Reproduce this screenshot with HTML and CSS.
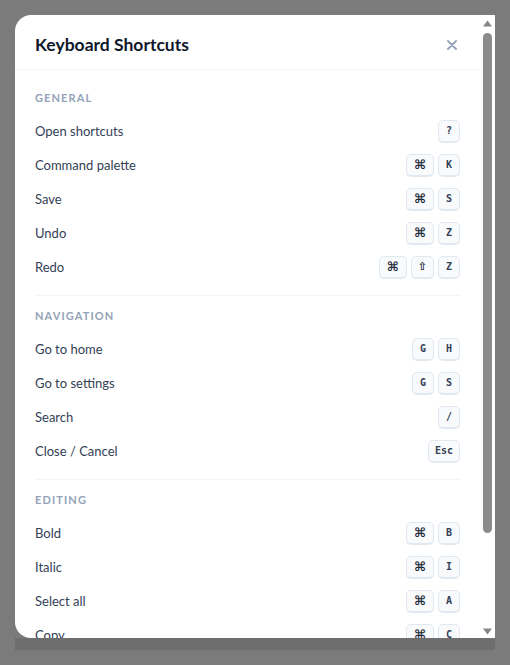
FILE: index.html
```html
<!DOCTYPE html>
<html lang="en">
<head>
    <meta charset="UTF-8">
    <meta name="viewport" content="width=device-width, initial-scale=1.0">
    <title>Keyboard Shortcuts</title>
    <link rel="stylesheet" href="styles.css">
</head>
<body>
    <div class="backdrop">
        <div class="modal-wrap">
            <div class="modal">
                <div class="modal-content">
                    <div class="modal-header">
                        <h2>Keyboard Shortcuts</h2>
                        <button class="close-btn" aria-label="Close">
                            <svg width="10" height="10" viewBox="0 0 10 10"><path d="M1 1L9 9M9 1L1 9" stroke="#94a3b8" stroke-width="1.8" stroke-linecap="round"/></svg>
                        </button>
                    </div>
                    <div class="modal-body">
                        <div class="section">
                            <div class="section-title">General</div>
                            <div class="row"><span>Open shortcuts</span><span class="keys"><kbd>?</kbd></span></div>
                            <div class="row"><span>Command palette</span><span class="keys"><kbd class="sym">⌘</kbd><kbd>K</kbd></span></div>
                            <div class="row"><span>Save</span><span class="keys"><kbd class="sym">⌘</kbd><kbd>S</kbd></span></div>
                            <div class="row"><span>Undo</span><span class="keys"><kbd class="sym">⌘</kbd><kbd>Z</kbd></span></div>
                            <div class="row"><span>Redo</span><span class="keys"><kbd class="sym">⌘</kbd><kbd class="shift">⇧</kbd><kbd>Z</kbd></span></div>
                        </div>
                        <div class="section">
                            <div class="section-title">Navigation</div>
                            <div class="row"><span>Go to home</span><span class="keys"><kbd>G</kbd><kbd>H</kbd></span></div>
                            <div class="row"><span>Go to settings</span><span class="keys"><kbd>G</kbd><kbd>S</kbd></span></div>
                            <div class="row"><span>Search</span><span class="keys"><kbd>/</kbd></span></div>
                            <div class="row"><span>Close / Cancel</span><span class="keys"><kbd>Esc</kbd></span></div>
                        </div>
                        <div class="section">
                            <div class="section-title">Editing</div>
                            <div class="row"><span>Bold</span><span class="keys"><kbd class="sym">⌘</kbd><kbd>B</kbd></span></div>
                            <div class="row"><span>Italic</span><span class="keys"><kbd class="sym">⌘</kbd><kbd>I</kbd></span></div>
                            <div class="row"><span>Select all</span><span class="keys"><kbd class="sym">⌘</kbd><kbd>A</kbd></span></div>
                            <div class="row"><span>Copy</span><span class="keys"><kbd class="sym">⌘</kbd><kbd>C</kbd></span></div>
                            <div class="row"><span>Paste</span><span class="keys"><kbd class="sym">⌘</kbd><kbd>V</kbd></span></div>
                            <div class="row"><span>Cut</span><span class="keys"><kbd class="sym">⌘</kbd><kbd>X</kbd></span></div>
                        </div>
                    </div>
                </div>
                <div class="scrollbar">
                    <svg class="arrow" width="9" height="7" viewBox="0 0 9 7"><path d="M4.5 0.5L9 6.5H0Z" fill="#858585"/></svg>
                    <div class="thumb"></div>
                    <div class="track-rest"></div>
                    <svg class="arrow" width="9" height="7" viewBox="0 0 9 7"><path d="M0 0.5H9L4.5 6.5Z" fill="#858585"/></svg>
                </div>
            </div>
            <div class="modal-edge"></div>
        </div>
    </div>
</body>
</html>
```

FILE: styles.css
```css
body {
    margin: 0;
    background-color: #7b7b7c;
    font-family: Lato, "Liberation Sans", sans-serif;
}
.backdrop {
    height: 665px;
    padding: 15px;
    box-sizing: border-box;
}
.modal-wrap {
    width: 480px;
}
.modal {
    display: flex;
    height: 623px;
    background-color: #fff;
    border-radius: 16px 0 0 16px;
    overflow: hidden;
}
.modal-content {
    flex: 1;
    overflow-y: auto;
    scrollbar-width: none;
}
.scrollbar {
    width: 15px;
    display: flex;
    flex-direction: column;
    align-items: center;
    padding: 5px 0 3px;
    box-sizing: border-box;
}
.scrollbar .thumb {
    width: 9px;
    height: 500px;
    margin-top: 6px;
    border-radius: 5px;
    background-color: #8b8b8b;
}
.scrollbar .track-rest {
    flex: 1;
}
.modal-edge {
    height: 12px;
    background-color: #6e6e6f;
}
.modal-header {
    display: flex;
    align-items: center;
    justify-content: space-between;
    padding: 20px 20px 14px;
    border-bottom: 1px solid #f1f5f9;
}
.modal-header h2 {
    margin: 0;
    font-size: 17.5px;
    line-height: 20px;
    font-weight: 700;
    color: #0f172a;
}
.close-btn {
    width: 14px;
    height: 14px;
    padding: 0;
    margin-right: 1px;
    border: none;
    background: none;
    display: flex;
    align-items: center;
    justify-content: center;
    cursor: pointer;
}
.modal-body {
    padding: 8px 20px 16px;
}
.section {
    padding: 12px 0 11px;
}
.section + .section {
    border-top: 1px solid #f1f5f9;
}
.section-title {
    font-size: 11px;
    line-height: 16px;
    font-weight: 700;
    letter-spacing: 0.1em;
    text-transform: uppercase;
    color: #94a3b8;
    margin-bottom: 8px;
}
.row {
    display: flex;
    align-items: center;
    justify-content: space-between;
    height: 34px;
    font-size: 13px;
    color: #334155;
}
.keys {
    display: flex;
    gap: 4px;
}
kbd {
    display: inline-flex;
    align-items: center;
    justify-content: center;
    box-sizing: border-box;
    min-width: 22px;
    height: 23px;
    padding: 0 6px;
    border: 1px solid #e2e8f0;
    border-bottom-width: 2px;
    border-radius: 5px;
    background-color: #f8fafc;
    font-family: "DejaVu Sans Mono", monospace;
    font-size: 10px;
    font-weight: 700;
    color: #334155;
}
kbd.sym {
    padding: 0 7px;
    font-family: "DejaVu Sans", sans-serif;
    font-size: 13px;
    font-weight: 700;
    color: #1e293b;
}
kbd.shift {
    font-family: "DejaVu Sans", sans-serif;
    font-size: 11px;
    color: #1e293b;
}
```
